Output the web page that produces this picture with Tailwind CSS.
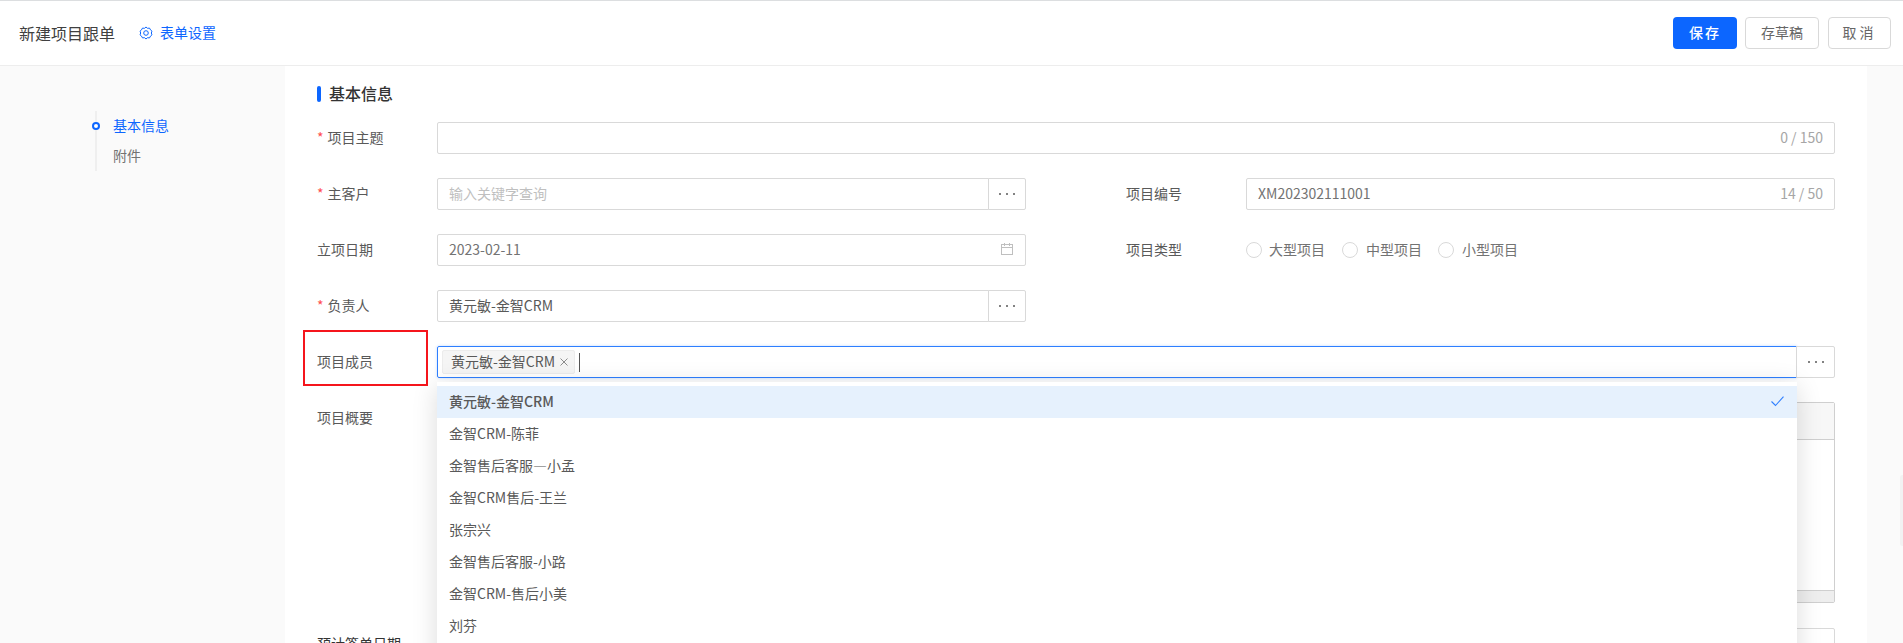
<!DOCTYPE html>
<html lang="zh">
<head>
<meta charset="utf-8">
<script src="https://cdn.jsdelivr.net/npm/@tailwindcss/browser@4"></script>
<title>新建项目跟单</title>
</head>
<body class="h-[643px] overflow-hidden bg-white text-[14px] text-[#595959] font-['Noto_Sans_CJK_SC','Noto_Sans',sans-serif]">
<div class="relative h-[643px] overflow-hidden border-t border-t-[#dcdee0]">
  <header class="flex h-[65px] items-center justify-between border-b border-[#ededed] bg-white pl-[19px] pr-[12px]">
    <div class="flex items-center">
      <span class="text-[16px] text-[#404040]">新建项目跟单</span>
      <svg class="ml-[24px] h-[14px] w-[14px]" viewBox="0 0 14 14" fill="none" stroke="#0c66ff" stroke-width="1"><path d="M7 1l1.500 1.300 2-.2 1 1.800 1.500 1.300L12.300 7l.7 1.800-1.500 1.300-1 1.800-2-.2L7 13l-1.500-1.300-2 .2-1-1.800L1 8.800 1.700 7 1 5.200l1.500-1.300 1-1.800 2 .2z"/><circle cx="7" cy="7" r="2.300"/></svg>
      <span class="ml-[7px] pb-[2px] text-[#0c66ff]">表单设置</span>
    </div>
    <div class="flex items-center">
      <button class="h-[32px] w-[64px] rounded-[4px] bg-[#0c66ff] pb-[2px] font-medium tracking-[2px] text-white">保存</button>
      <button class="ml-[8px] h-[32px] w-[74px] rounded-[4px] border border-[#d9d9d9] bg-white pb-[2px] text-[#666]">存草稿</button>
      <button class="ml-[9px] h-[32px] w-[63px] rounded-[4px] border border-[#d9d9d9] bg-white pb-[2px] tracking-[3px] text-[#666]">取消</button>
    </div>
  </header>
  <div class="flex h-[577px]">
    <aside class="w-[285px] shrink-0 bg-[#fafafa] pl-[95px] pt-[45px]">
      <nav class="h-[60px] border-l-2 border-[#efefef]">
        <div class="relative flex h-[30px] items-center pb-[2px] pl-[16px] text-[#0c66ff]">
          <span class="absolute left-[-5px] top-[11px] h-[8px] w-[8px] rounded-full border-2 border-[#0c66ff] bg-white"></span>基本信息
        </div>
        <div class="flex h-[30px] items-center pb-[2px] pl-[16px] text-[#737373]">附件</div>
      </nav>
    </aside>
    <main class="relative flex-1 px-[32px] pt-[20px]">
      <h2 class="mb-[20px] flex h-[16px] items-center text-[16px] font-medium text-[#333]">
        <span class="mr-[8px] h-[16px] w-[4px] rounded-[2px] bg-[#0c66ff]"></span><span class="pb-[2px]">基本信息</span>
      </h2>

      <div class="mb-[24px] flex h-[32px] items-center">
        <label class="w-[120px] shrink-0 pb-[2px]"><span class="mr-[4px] text-[#ff4d4f]">*</span>项目主题</label>
        <div class="flex h-[32px] flex-1 items-center justify-end rounded-[2px] border border-[#d9d9d9] px-[11px] pb-[2px] text-[#a6a6a6]">0 / 150</div>
      </div>

      <div class="mb-[24px] grid h-[32px] grid-cols-2 gap-x-[100px]">
        <div class="flex items-center">
          <label class="w-[120px] shrink-0 pb-[2px]"><span class="mr-[4px] text-[#ff4d4f]">*</span>主客户</label>
          <div class="flex h-[32px] flex-1 items-center rounded-l-[2px] border border-[#d9d9d9] px-[11px] pb-[2px] text-[#bfbfbf]">输入关键字查询</div>
          <button class="ml-[-1px] flex h-[32px] w-[38px] items-center justify-center gap-[5px] rounded-r-[2px] border border-[#d9d9d9] bg-white">
            <i class="h-[2px] w-[2px] rounded-full bg-[#595959]"></i><i class="h-[2px] w-[2px] rounded-full bg-[#595959]"></i><i class="h-[2px] w-[2px] rounded-full bg-[#595959]"></i>
          </button>
        </div>
        <div class="flex items-center">
          <label class="w-[120px] shrink-0 pb-[2px]">项目编号</label>
          <div class="flex h-[32px] flex-1 items-center justify-between rounded-[2px] border border-[#d9d9d9] px-[11px] pb-[2px] text-[#737373]"><span>XM202302111001</span><span class="text-[#a6a6a6]">14 / 50</span></div>
        </div>
      </div>

      <div class="mb-[24px] grid h-[32px] grid-cols-2 gap-x-[100px]">
        <div class="flex items-center">
          <label class="w-[120px] shrink-0 pb-[2px]">立项日期</label>
          <div class="flex h-[32px] flex-1 items-center justify-between rounded-[2px] border border-[#d9d9d9] px-[11px] pb-[2px] text-[#737373]">2023-02-11
            <svg class="h-[14px] w-[14px]" viewBox="0 0 14 14" fill="none" stroke="#bfbfbf" stroke-width="1"><rect x="1.500" y="2.500" width="11" height="10"/><path d="M1.500 5.500h11M4.500 1v3M9.500 1v3"/></svg>
          </div>
        </div>
        <div class="flex items-center">
          <label class="w-[120px] shrink-0 pb-[2px]">项目类型</label>
          <div class="flex items-center text-[#737373]">
            <span class="h-[16px] w-[16px] rounded-full border border-[#d9d9d9]"></span><span class="ml-[7px] mr-[17px] pb-[2px]">大型项目</span>
            <span class="h-[16px] w-[16px] rounded-full border border-[#d9d9d9]"></span><span class="ml-[8px] mr-[16px] pb-[2px]">中型项目</span>
            <span class="h-[16px] w-[16px] rounded-full border border-[#d9d9d9]"></span><span class="ml-[8px] pb-[2px]">小型项目</span>
          </div>
        </div>
      </div>

      <div class="mb-[24px] grid h-[32px] grid-cols-2 gap-x-[100px]">
        <div class="flex items-center">
          <label class="w-[120px] shrink-0 pb-[2px]"><span class="mr-[4px] text-[#ff4d4f]">*</span>负责人</label>
          <div class="flex h-[32px] flex-1 items-center rounded-l-[2px] border border-[#d9d9d9] px-[11px] pb-[2px]">黄元敏-金智CRM</div>
          <button class="ml-[-1px] flex h-[32px] w-[38px] items-center justify-center gap-[5px] rounded-r-[2px] border border-[#d9d9d9] bg-white">
            <i class="h-[2px] w-[2px] rounded-full bg-[#595959]"></i><i class="h-[2px] w-[2px] rounded-full bg-[#595959]"></i><i class="h-[2px] w-[2px] rounded-full bg-[#595959]"></i>
          </button>
        </div>
        <div></div>
      </div>

      <div class="relative mb-[24px] flex h-[32px] items-center">
        <label class="w-[120px] shrink-0 pb-[2px]">项目成员</label>
        <span class="absolute left-[-14px] top-[-16px] h-[56px] w-[125px] border-2 border-[#f5151c]"></span>
        <div class="flex h-[32px] flex-1 items-center rounded-l-[2px] border border-[#2e7fff] pl-[4px] shadow-[0_0_3px_rgba(46,127,255,0.3)]">
          <span class="flex h-[24px] w-[133px] items-center rounded-[2px] border border-[#ececec] bg-[#f5f5f5] pl-[8px]"><span class="pb-[2px]">黄元敏-金智CRM</span>
            <svg class="ml-[5px] h-[8px] w-[8px]" viewBox="0 0 8 8" fill="none" stroke="#8c8c8c" stroke-width="1"><path d="M.5.5l7 7M7.500.5l-7 7"/></svg>
          </span>
          <span class="ml-[4px] h-[19px] w-px bg-[#555]"></span>
        </div>
        <button class="ml-[-1px] flex h-[32px] w-[39px] items-center justify-center gap-[5px] rounded-r-[2px] border border-[#d9d9d9] bg-white">
          <i class="h-[2px] w-[2px] rounded-full bg-[#595959]"></i><i class="h-[2px] w-[2px] rounded-full bg-[#595959]"></i><i class="h-[2px] w-[2px] rounded-full bg-[#595959]"></i>
        </button>
        <div class="absolute left-[120px] top-[36px] z-10 h-[300px] w-[1360px] bg-white pt-[4px] shadow-[0_4px_24px_rgba(0,0,0,0.14)]">
          <div class="flex h-[32px] items-center justify-between bg-[#e6f1fd] pb-[2px] pl-[12px] pr-[13px] font-medium">黄元敏-金智CRM
            <svg class="h-[11px] w-[13px]" viewBox="0 0 13 11" fill="none" stroke="#2e7fff" stroke-width="1.100"><path d="M.5 5.500l4 4L12.500.7"/></svg>
          </div>
          <div class="flex h-[32px] items-center pb-[2px] pl-[12px]">金智CRM-陈菲</div>
          <div class="flex h-[32px] items-center pb-[2px] pl-[12px]">金智售后客服—小孟</div>
          <div class="flex h-[32px] items-center pb-[2px] pl-[12px]">金智CRM售后-王兰</div>
          <div class="flex h-[32px] items-center pb-[2px] pl-[12px]">张宗兴</div>
          <div class="flex h-[32px] items-center pb-[2px] pl-[12px]">金智售后客服-小路</div>
          <div class="flex h-[32px] items-center pb-[2px] pl-[12px]">金智CRM-售后小美</div>
          <div class="flex h-[32px] items-center pb-[2px] pl-[12px]">刘芬</div>
        </div>
      </div>

      <div class="mb-[25px] flex h-[201px]">
        <label class="mt-[5px] w-[120px] shrink-0">项目概要</label>
        <div class="flex flex-1 flex-col rounded-[2px] border border-[#cfcfcf]">
          <div class="h-[37px] border-b border-[#cfcfcf] bg-[#f7f7f7]"></div>
          <div class="flex-1"></div>
          <div class="h-[12px] border-t border-[#cfcfcf] bg-[#eeeeee]"></div>
        </div>
      </div>

      <div class="flex h-[32px] items-center">
        <label class="w-[120px] shrink-0 pb-[2px] text-[#333]">预计签单日期</label>
        <div class="h-[32px] flex-1 rounded-[2px] border border-[#d9d9d9]"></div>
      </div>
    </main>
    <aside class="relative w-[36px] shrink-0 bg-[#fafafa]">
      <span class="absolute right-0 top-[409px] h-[71px] w-[3px] rounded-l-[2px] bg-[#f2f2f2]"></span>
    </aside>
  </div>
</div>
</body>
</html>
